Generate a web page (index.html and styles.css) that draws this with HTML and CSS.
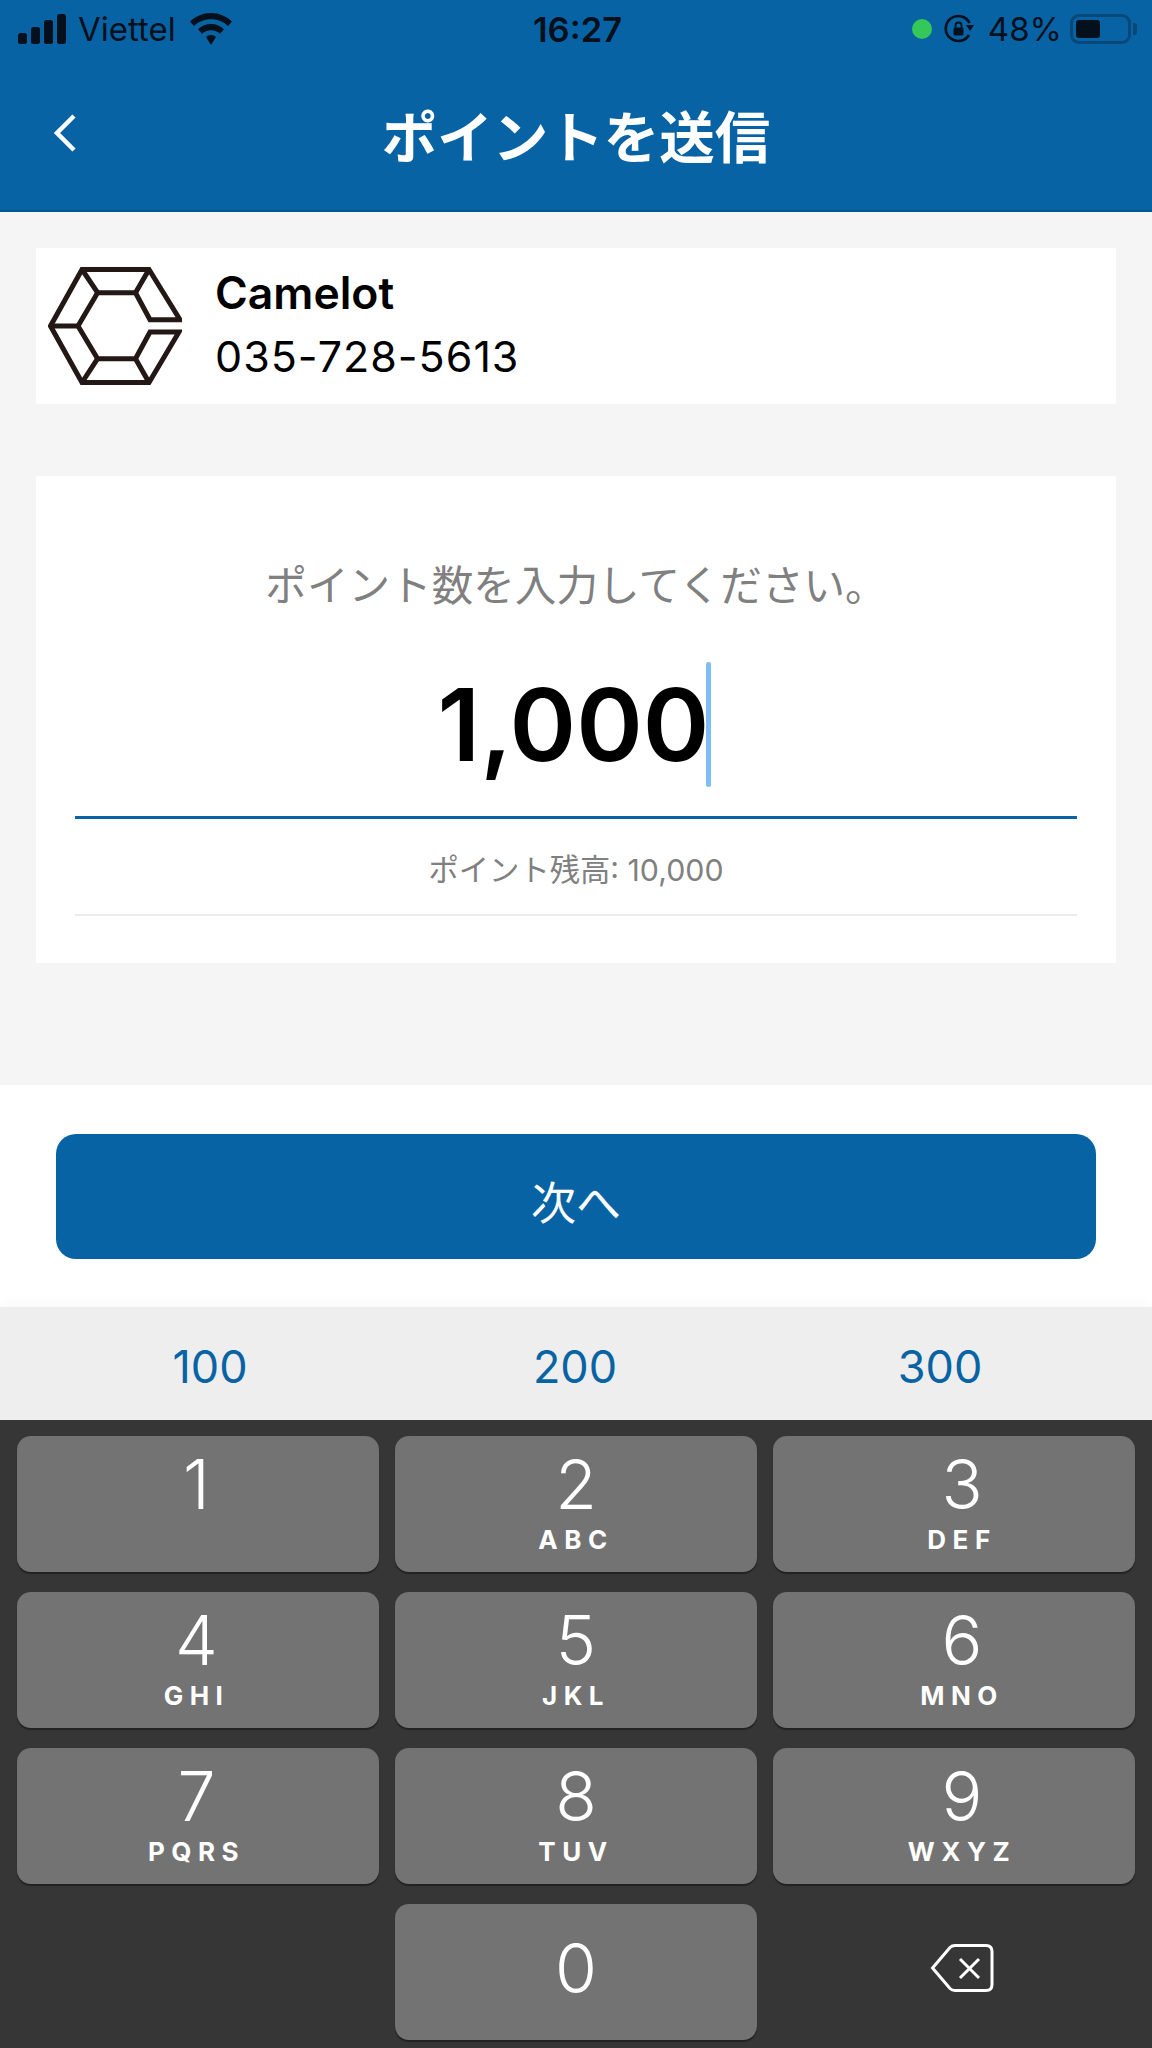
FILE: index.html
```html
<!DOCTYPE html>
<html lang="ja">
<head>
  <meta charset="UTF-8">
  <title>ポイントを送信</title>
  <link rel="stylesheet" href="styles.css">
</head>
<body>

<header class="top">
  <div class="status-bar">
    <div class="status-left">
      <svg class="signal" viewBox="0 0 48 30"><rect x="0" y="19" width="9" height="11" rx="2.5"/><rect x="13" y="13" width="9" height="17" rx="2.5"/><rect x="26" y="6" width="9" height="24" rx="2.5"/><rect x="39" y="0" width="9" height="30" rx="2.5"/></svg>
      <span>Viettel</span>
      <svg class="wifi" viewBox="0 0 42 32"><path d="M21 0C13 0 6 3 0 8.500L4 13C8.500 8.700 14.500 6.300 21 6.300S33.500 8.700 38 13L42 8.500C36 3 29 0 21 0Z"/><path d="M21 11C16 11 11.600 12.900 8 16.200L12 20.700C14.400 18.500 17.500 17.300 21 17.300S27.600 18.500 30 20.700L34 16.200C30.400 12.900 26 11 21 11Z"/><path d="M21 22C19 22 17.300 22.700 16 23.900L21 32L26 23.900C24.700 22.700 23 22 21 22Z"/></svg>
    </div>
    <div class="status-time">16:27</div>
    <div class="status-right">
      <span class="green-dot"></span>
      <svg class="rotate-lock" viewBox="0 0 30 30"><path d="M25 21A12.500 12.500 0 1 1 25.500 9" fill="none" stroke="#04101c" stroke-width="2.600"/><path d="M22 11H30L26 17Z"/><rect x="9.500" y="13.500" width="10" height="8" rx="1.500"/><path d="M11.500 14V11.500A3 3 0 0 1 17.500 11.500V14" fill="none" stroke="#04101c" stroke-width="1.800"/></svg>
      <span class="battery-text">48%</span>
      <span class="battery"><span class="battery-level"></span></span>
      <span class="battery-nub"></span>
    </div>
  </div>
  <div class="title-row">
    <svg class="back" viewBox="0 0 26 40"><path d="M22 3L5 20L22 37" fill="none" stroke="#fff" stroke-width="4.500"/></svg>
    <h1>ポイントを送信</h1>
  </div>
</header>

<main class="content">
  <section class="shop-card">
    <svg class="shop-logo" viewBox="0 0 134 118">
      <g fill="none" stroke="#231815" stroke-width="5">
        <path d="M132 52.700L101 2.500H34L2.500 59L34 115.500H101L131 65H102L87.500 91.700H49.600L30 59L49.600 25.700H87.500L102 52.700H132Z"/>
        <path d="M34 2.500L49.600 25.700M101 2.500L87.500 25.700M2.500 59H30M49.600 91.700L34 115.500M87.500 91.700L101 115.500"/>
      </g>
    </svg>
    <div class="shop-info">
      <div class="shop-name">Camelot</div>
      <div class="shop-phone">035-728-5613</div>
    </div>
  </section>

  <section class="amount-card">
    <p class="amount-label">ポイント数を入力してください。</p>
    <div class="amount-row">
      <span class="amount">1,000</span>
      <span class="caret"></span>
    </div>
    <p class="balance">ポイント残高: 10,000</p>
  </section>
</main>

<div class="action">
  <button class="next-btn">次へ</button>
</div>

<div class="suggestions">
  <span>100</span>
  <span>200</span>
  <span>300</span>
</div>

<div class="keyboard">
  <div class="key"><span class="num">1</span></div>
  <div class="key"><span class="num">2</span><span class="letters">ABC</span></div>
  <div class="key"><span class="num">3</span><span class="letters">DEF</span></div>
  <div class="key"><span class="num">4</span><span class="letters">GHI</span></div>
  <div class="key"><span class="num">5</span><span class="letters">JKL</span></div>
  <div class="key"><span class="num">6</span><span class="letters">MNO</span></div>
  <div class="key"><span class="num">7</span><span class="letters">PQRS</span></div>
  <div class="key"><span class="num">8</span><span class="letters">TUV</span></div>
  <div class="key"><span class="num">9</span><span class="letters">WXYZ</span></div>
  <div class="key-empty"></div>
  <div class="key key-zero"><span class="num">0</span></div>
  <div class="key-empty key-delete">
    <svg class="backspace" viewBox="0 0 64 50"><path d="M2.500 25L20 4.500Q22 2.500 25 2.500H56Q62 2.500 62 8.500V41.500Q62 47.500 56 47.500H25Q22 47.500 20 45.500Z" fill="none" stroke="#fff" stroke-width="3"/><path d="M30 16L49 35M49 16L30 35" fill="none" stroke="#fff" stroke-width="3"/></svg>
  </div>
</div>

</body>
</html>
```

FILE: styles.css
```css
* {
  box-sizing: border-box;
}

body {
  margin: 0;
  width: 1152px;
  height: 2048px;
  overflow: hidden;
  font-family: "Inter", "Noto Sans CJK JP", sans-serif;
  background: #f5f5f5;
}

.top {
  height: 212px;
  background-color: #0863a4;
  border-bottom: 2px solid #07558e;
}

.status-bar {
  height: 58px;
  padding: 0 15px 0 18px;
  display: flex;
  align-items: center;
  color: #04101c;
  font-size: 33px;
}

.status-left,
.status-right {
  flex: 1;
  display: flex;
  align-items: center;
}

.status-right {
  justify-content: flex-end;
}

.status-time {
  font-weight: 600;
  font-size: 34.500px;
}

.signal {
  width: 48px;
  height: 30px;
  fill: #04101c;
  margin-right: 12px;
}

.wifi {
  width: 42px;
  height: 32px;
  fill: #04101c;
  margin-left: 14px;
}

.green-dot {
  width: 20px;
  height: 20px;
  border-radius: 50%;
  background-color: #34c759;
  margin-right: 12px;
}

.rotate-lock {
  width: 30px;
  height: 30px;
  fill: #04101c;
  margin-right: 14px;
}

.battery-text {
  margin-right: 8px;
}

.battery {
  width: 61px;
  height: 30px;
  border: 3px solid #07487a;
  border-radius: 9px;
  padding: 3px;
}

.battery-level {
  display: block;
  width: 24px;
  height: 100%;
  background-color: #04101c;
  border-radius: 3px;
}

.battery-nub {
  width: 4px;
  height: 12px;
  margin-left: 2px;
  background-color: #07487a;
  border-radius: 0 3px 3px 0;
}

.title-row {
  position: relative;
  height: 152px;
  display: flex;
  align-items: center;
  justify-content: center;
}

.title-row h1 {
  margin: 0;
  color: white;
  font-size: 55.500px;
  font-weight: 700;
}

.back {
  position: absolute;
  left: 52px;
  top: 55px;
  width: 26px;
  height: 40px;
}

.content {
  height: 873px;
  padding: 36px 36px 0 36px;
}

.shop-card {
  height: 156px;
  background: white;
  padding: 0 12px;
  display: flex;
  align-items: center;
  gap: 33px;
}

.shop-logo {
  width: 134px;
  height: 118px;
}

.shop-info {
  padding-top: 6px;
}

.shop-name {
  font-size: 44.500px;
  font-weight: 600;
  line-height: 60px;
  margin-top: -6px;
}

.shop-phone {
  font-size: 43px;
  line-height: 66px;
  letter-spacing: 1px;
}

.amount-card {
  height: 487px;
  margin-top: 72px;
  background: white;
  padding: 0 39px;
  text-align: center;
}

.amount-label {
  margin: 0;
  padding-top: 80px;
  font-size: 41.600px;
  line-height: 60px;
  color: #808080;
}

.amount-row {
  height: 203px;
  border-bottom: 3px solid #0863a4;
  display: flex;
  justify-content: center;
  padding: 46px 3px 0 0;
}

.amount {
  font-size: 101px;
  font-weight: 600;
  line-height: 125px;
  color: black;
}

.caret {
  width: 5px;
  height: 125px;
  margin-left: -3px;
  background-color: #7dbdf2;
  border-radius: 3px;
}

.balance {
  margin: 0;
  height: 97px;
  line-height: 102px;
  font-size: 30.300px;
  color: #808080;
  border-bottom: 2px solid #ebebeb;
}

.action {
  height: 222px;
  background: white;
  padding: 49px 56px 0 56px;
}

.next-btn {
  display: block;
  width: 100%;
  height: 125px;
  padding-top: 8px;
  background-color: #0863a4;
  color: white;
  border: none;
  border-radius: 20px;
  font-family: inherit;
  font-size: 45px;
}

.suggestions {
  height: 113px;
  padding: 6px 2px 0 0;
  background-color: #eeeeee;
  box-shadow: 0 -6px 10px rgba(0, 0, 0, 0.02);
  display: grid;
  grid-template-columns: 365px 365px 365px;
  justify-content: center;
  align-items: center;
  text-align: center;
  color: #0863a4;
  font-size: 45px;
}

.keyboard {
  height: 628px;
  background-color: #363636;
  padding: 16px 17px 0 17px;
  display: grid;
  grid-template-columns: repeat(3, 362px);
  grid-auto-rows: 136px;
  column-gap: 16px;
  row-gap: 20px;
}

.key {
  background-color: #737373;
  border-radius: 14px;
  box-shadow: 0 2px 1px #222222;
  color: white;
  text-align: center;
  padding-top: 9px;
}

.key:nth-child(3n + 1) {
  padding-right: 3px;
}

.key:nth-child(3n) {
  padding-left: 16px;
}

.key .num {
  display: block;
  font-size: 68px;
  font-weight: 350;
  line-height: 78px;
}

.key .letters {
  display: block;
  font-size: 26px;
  font-weight: 700;
  letter-spacing: 6.500px;
  line-height: 30px;
  margin-top: 2px;
}

.key-zero {
  padding-top: 25px;
}

.key-empty {
  display: flex;
  align-items: center;
  justify-content: center;
}

.key-delete {
  padding: 0 0 8px 16px;
}

.backspace {
  width: 64px;
  height: 50px;
}
```
